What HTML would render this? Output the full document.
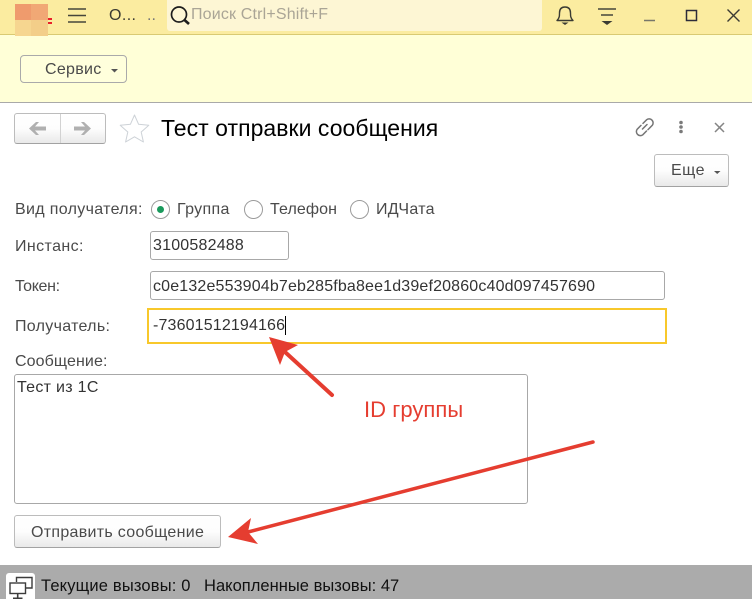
<!DOCTYPE html>
<html lang="ru"><head><meta charset="utf-8"><title>Тест</title>
<style>
html,body{margin:0;padding:0}
body{width:752px;height:599px;position:relative;overflow:hidden;background:#fff;font-family:"Liberation Sans",sans-serif;font-size:16px;color:#4a4a4a}
.a{position:absolute;box-sizing:border-box}
.t{position:absolute;white-space:nowrap;line-height:18px}
.in{position:absolute;box-sizing:border-box;background:#fff;border:1px solid #a8a8a8;border-radius:3px}
.btn{position:absolute;box-sizing:border-box;border:1px solid #bcbcbc;border-bottom-color:#a2a2a2;border-radius:3px;background:linear-gradient(#fff 0%,#fdfdfd 50%,#e9e9e9 100%)}
.r{position:absolute;box-sizing:border-box;width:19px;height:19px;border:1px solid #9b9b9b;border-radius:50%;background:#fff}
svg{position:absolute;overflow:visible}
</style></head><body>

<div class="a" style="left:0;top:0;width:752px;height:35px;background:#fbeca0;border-bottom:1px solid #d9ca72"></div>
<div class="a" style="left:0;top:35px;width:752px;height:68px;background:#ffffd7;border-bottom:1px solid #a9a9a9"></div>
<div class="a" style="left:167px;top:0;width:375px;height:31px;background:#fdf6d4;border-radius:0 0 3px 3px"></div>

<div class="a" style="left:15px;top:4px;width:16px;height:16px;background:#ef9b6d"></div>
<div class="a" style="left:31px;top:4px;width:17px;height:16px;background:#f1a875"></div>
<div class="a" style="left:15px;top:20px;width:16px;height:16px;background:#f6d690"></div>
<div class="a" style="left:31px;top:20px;width:17px;height:16px;background:#f3ce89"></div>
<div class="a" style="left:48px;top:18px;width:4px;height:2px;background:#e8202a"></div>
<div class="a" style="left:48px;top:22px;width:4px;height:2px;background:#e8202a"></div>

<svg style="left:0;top:0" width="752" height="35" viewBox="0 0 752 35" fill="none">
<path d="M68 9H86M68 15.500H86M68 22H86" stroke="#46463a" stroke-width="1.600"/>
<circle cx="179" cy="14.500" r="7.500" stroke="#1c1c1c" stroke-width="1.700"/>
<path d="M184.500 20L189 24" stroke="#1c1c1c" stroke-width="2.600"/>
<path d="M557 20.500C559.500 18 559.500 16 559.500 13C559.500 9 561.500 7 565 7C568.500 7 570.500 9 570.500 13C570.500 16 570.500 18 573 20.500Z" stroke="#3b3b33" stroke-width="1.400" stroke-linejoin="round"/>
<path d="M561.500 22.500H568.500L565 25Z" fill="#3b3b33"/>
<path d="M598 9H616M601 15H613" stroke="#46463a" stroke-width="1.500"/>
<path d="M601.500 21H612.500L607 25Z" fill="#3b3b33"/>
<path d="M644 20.500H655" stroke="#77776a" stroke-width="1.500"/>
<rect x="686.500" y="10.500" width="10" height="10" stroke="#2c2c3a" stroke-width="1.500"/>
<path d="M727.500 9.500L739.500 21.500M739.500 9.500L727.500 21.500" stroke="#3b3b33" stroke-width="1.400"/>
</svg>

<div class="t" style="left:109px;top:7px;color:#3a3a32;font-size:16px;letter-spacing:.4px">О...</div>
<div class="t" style="left:147px;top:7px;color:#777;font-size:16px">..</div>
<div class="t" style="left:191px;top:6px;color:#aaa596;font-size:16px;letter-spacing:.17px">Поиск Ctrl+Shift+F</div>

<div class="btn" style="left:20px;top:55px;width:107px;height:28px;background:#ffffdc;border:1px solid #aaa;border-radius:4px"></div>
<div class="t" style="left:45px;top:61px;color:#4a4a4a;font-size:16px;letter-spacing:.3px">Сервис</div>
<svg style="left:0;top:0" width="140" height="90"><path d="M111 69H118L114.500 72.500Z" fill="#555"/></svg>

<div class="btn" style="left:14px;top:113px;width:92px;height:31px"></div>
<div class="a" style="left:60px;top:114px;width:1px;height:29px;background:#d2d2d2"></div>
<svg style="left:0;top:0" width="180" height="150" fill="#b0b0b0">
<path d="M29 128.500L36 122H39L35 126.500H46V130.500H35L39 135H36Z"/>
<path d="M91 128.500L84 122H81L85 126.500H74V130.500H85L81 135H84Z"/>
<path d="M134.500 115L138.600 124.300L148.800 125.300L141.200 132L143.400 142L134.500 136.800L125.600 142L127.800 132L120.200 125.300L130.400 124.300Z" fill="#fff" stroke="#cdd2d7" stroke-width="1" stroke-linejoin="round"/>
</svg>
<div class="t" style="left:161px;top:114px;color:#000;font-size:23px;line-height:28px;letter-spacing:.04px">Тест отправки сообщения</div>

<svg style="left:0;top:0" width="752" height="150" fill="none">
<path d="M643 123.400L646.700 119.700A4 4 0 0 1 652.300 125.300L648 129.600" stroke="#757575" stroke-width="1.500" stroke-linecap="round"/>
<path d="M641 125.400L637.200 129.200A4 4 0 0 0 642.800 134.800L646.500 131" stroke="#757575" stroke-width="1.500" stroke-linecap="round"/>
<path d="M642.500 129L647 124.500" stroke="#757575" stroke-width="1.500" stroke-linecap="round"/>
<circle cx="681" cy="122.500" r="1.800" fill="#7a7a7a"/><circle cx="681" cy="127" r="1.800" fill="#7a7a7a"/><circle cx="681" cy="131.500" r="1.800" fill="#7a7a7a"/>
<path d="M715 123L724 132M724 123L715 132" stroke="#858585" stroke-width="1.500"/>
</svg>

<div class="btn" style="left:654px;top:154px;width:75px;height:33px"></div>
<div class="t" style="left:671px;top:162px;color:#4a4a4a;font-size:16px;letter-spacing:.5px">Еще</div>
<svg style="left:0;top:0" width="752" height="190"><path d="M714 171H720.500L717.200 174Z" fill="#555"/></svg>

<div class="t" style="left:15px;top:201px;letter-spacing:.33px">Вид получателя:</div>
<div class="r" style="left:151px;top:200px"></div>
<div class="a" style="left:157px;top:206px;width:7px;height:7px;border-radius:50%;background:#1a9a5c"></div>
<div class="t" style="left:177px;top:201px;letter-spacing:.33px">Группа</div>
<div class="r" style="left:244px;top:200px"></div>
<div class="t" style="left:270px;top:201px;letter-spacing:.1px">Телефон</div>
<div class="r" style="left:350px;top:200px"></div>
<div class="t" style="left:376px;top:201px;letter-spacing:.3px">ИДЧата</div>

<div class="t" style="left:15px;top:238px;letter-spacing:.4px">Инстанс:</div>
<div class="in" style="left:150px;top:231px;width:139px;height:29px"></div>
<div class="t" style="left:153px;top:237px;color:#333;letter-spacing:.2px">3100582488</div>

<div class="t" style="left:15px;top:278px;letter-spacing:-.35px">Токен:</div>
<div class="in" style="left:150px;top:271px;width:515px;height:29px"></div>
<div class="t" style="left:153px;top:278px;color:#333;letter-spacing:.16px">c0e132e553904b7eb285fba8ee1d39ef20860c40d097457690</div>

<div class="t" style="left:15px;top:318px;letter-spacing:.3px">Получатель:</div>
<div class="a" style="left:147px;top:308px;width:520px;height:36px;border:2px solid #f8c82b;background:#fff"></div>
<div class="t" style="left:153px;top:317px;color:#333;letter-spacing:.15px">-73601512194166</div>
<div class="a" style="left:285px;top:316px;width:1px;height:19px;background:#000"></div>

<div class="t" style="left:15px;top:353px;letter-spacing:.1px">Сообщение:</div>
<div class="in" style="left:14px;top:374px;width:514px;height:130px"></div>
<div class="t" style="left:17px;top:379px;color:#333;letter-spacing:.3px">Тест из 1С</div>

<div class="btn" style="left:14px;top:515px;width:207px;height:33px"></div>
<div class="t" style="left:31px;top:524px;color:#4a4a4a;letter-spacing:.3px">Отправить сообщение</div>

<svg style="left:0;top:0" width="752" height="599" fill="none">
<path d="M332 395L285 352" stroke="#e53d30" stroke-width="4" stroke-linecap="round"/>
<path d="M269 337L298 345L285 352L280 365Z" fill="#e53d30"/>
<path d="M593 442L248 532" stroke="#e53d30" stroke-width="3.500" stroke-linecap="round"/>
<path d="M228 537L251 518L248 532L258 544Z" fill="#e53d30"/>
</svg>
<div class="t" style="left:364px;top:398px;color:#e53d30;font-size:22px;line-height:24px;letter-spacing:.05px">ID группы</div>

<div class="a" style="left:0;top:565px;width:752px;height:34px;background:#ababab"></div>
<div class="a" style="left:6px;top:573px;width:29px;height:26px;background:#fff;border-radius:3px 3px 0 0"></div>
<svg style="left:0;top:0" width="60" height="599" fill="none">
<path d="M16.500 582V577.500H32V588H26" stroke="#3c3c3c" stroke-width="1.400"/>
<rect x="10" y="583" width="15.500" height="10.500" stroke="#3c3c3c" stroke-width="1.400"/>
<path d="M17.700 594V598M13 598.300H22.500" stroke="#3c3c3c" stroke-width="1.600"/>
</svg>
<div class="t" style="left:41px;top:577px;color:#111;font-size:16.500px;letter-spacing:.17px">Текущие вызовы: 0</div>
<div class="t" style="left:204px;top:577px;color:#111;font-size:16.500px;letter-spacing:.03px">Накопленные вызовы: 47</div>

</body></html>
